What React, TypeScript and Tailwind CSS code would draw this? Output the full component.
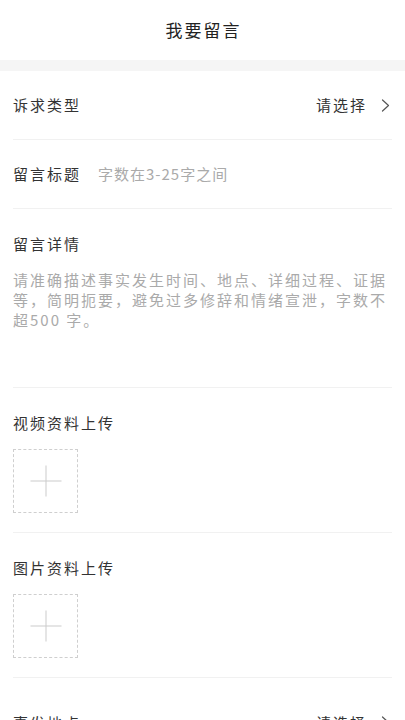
const font = "font-['Noto_Sans_CJK_SC','Noto_Sans',sans-serif]"

function Chevron() {
  return (
    <svg width="9" height="13" viewBox="0 0 9 13" fill="none" className="mr-[2px]">
      <polyline points="1.5,1 7.5,6.5 1.5,12" stroke="#555" strokeWidth="1.2" strokeLinecap="round" strokeLinejoin="round" />
    </svg>
  )
}

function UploadBox() {
  return (
    <div className="relative h-[64px] w-[65px] border border-dashed border-[#cfcfcf]">
      <div className="absolute left-1/2 top-1/2 h-px w-[31px] -translate-x-1/2 -translate-y-1/2 bg-[#cccccc]" />
      <div className="absolute left-1/2 top-1/2 h-[31px] w-px -translate-x-1/2 -translate-y-1/2 bg-[#cccccc]" />
    </div>
  )
}

function SelectRow({ label, last }: { label: string; last?: boolean }) {
  return (
    <div
      className={`flex items-center justify-between ${
        last ? "h-[88px] pt-[1px]" : "h-[69px] border-b border-[#f1f1f1]"
      }`}
    >
      <span className="text-[15px] leading-5 tracking-[2px] text-[#333]">{label}</span>
      <div className="flex items-center gap-[14px]">
        <span className="text-[15px] leading-5 tracking-[2px] text-[#333]">请选择</span>
        <Chevron />
      </div>
    </div>
  )
}

function UploadSection({ label }: { label: string }) {
  return (
    <div className="flex flex-col gap-4 border-b border-[#f1f1f1] pt-[25px] pb-[19px]">
      <span className="text-[15px] leading-5 tracking-[2px] text-[#333]">{label}</span>
      <UploadBox />
    </div>
  )
}

export default function App() {
  return (
    <div className={`min-h-screen bg-white ${font}`}>
      <header className="flex h-[60px] items-center justify-center">
        <h1 className="pl-[2px] text-[17px] tracking-[2px] text-[#222]">我要留言</h1>
      </header>
      <div className="h-[11px] bg-[#f5f5f5]" />

      <div className="px-[13px]">
        <SelectRow label="诉求类型" />

        <div className="flex h-[69px] items-center gap-[17px] border-b border-[#f1f1f1]">
          <span className="text-[15px] leading-5 tracking-[2px] text-[#333]">留言标题</span>
          <span className="text-[15px] leading-5 tracking-[1px] text-[#aaa]">字数在3-25字之间</span>
        </div>

        <div className="flex h-[179px] flex-col gap-4 border-b border-[#f1f1f1] pt-[25px]">
          <span className="text-[15px] leading-5 tracking-[2px] text-[#333]">留言详情</span>
          <p className="text-[15px] leading-5 tracking-[2px] text-[#aaa]">
            请准确描述事实发生时间、地点、详细过程、证据等，简明扼要，避免过多修辞和情绪宣泄，字数不超500 字。
          </p>
        </div>

        <UploadSection label="视频资料上传" />
        <UploadSection label="图片资料上传" />

        <SelectRow label="事发地点" last />
      </div>
    </div>
  )
}
